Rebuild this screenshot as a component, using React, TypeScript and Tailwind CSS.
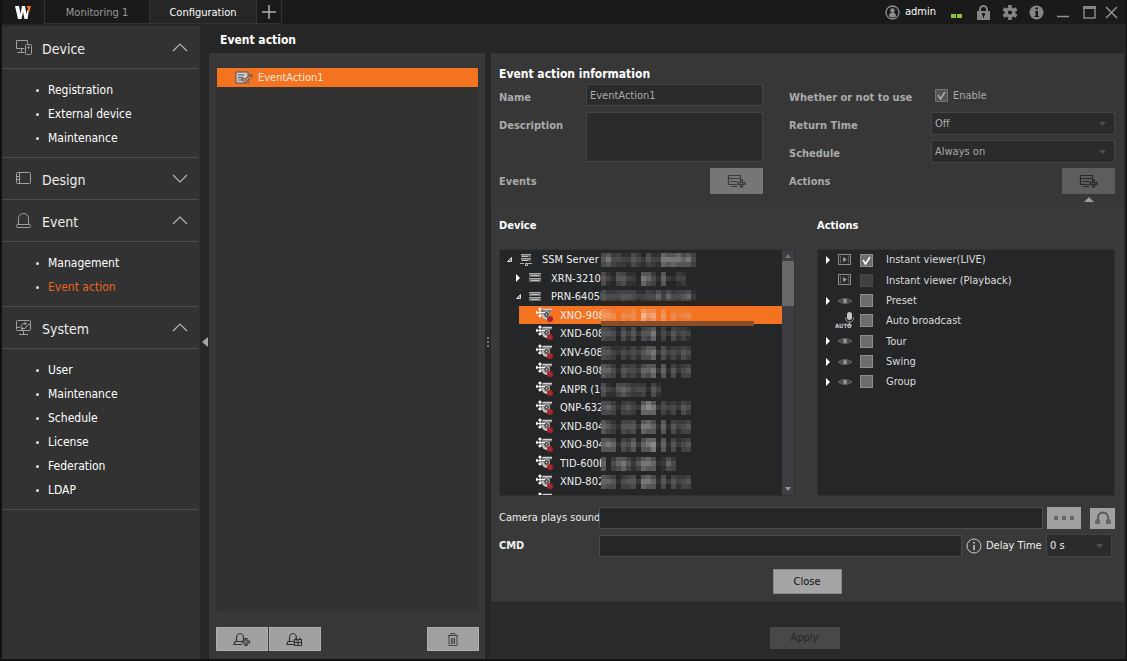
import React, { useState } from 'react';
import clsx from 'clsx';

const menu = [
  { title: 'Device', icon: 'device', items: ['Registration', 'External device', 'Maintenance'] },
  { title: 'Design', icon: 'design', items: [] },
  { title: 'Event', icon: 'event', items: ['Management', 'Event action'] },
  { title: 'System', icon: 'system', items: ['User', 'Maintenance', 'Schedule', 'License', 'Federation', 'LDAP'] },
];

// mask: brightness of each hidden block, 0-9
const devices = [
  { name: 'SSM Server (', depth: 0, open: true, mask: '5744335425337777674' },
  { name: 'XRN-3210E', depth: 1, open: false, mask: '53155320764162133' },
  { name: 'PRN-6405D', depth: 1, open: true, mask: '5444554334463644562' },
  { name: 'XNO-908', depth: 2, mask: '665154518671615345' },
  { name: 'XND-608', depth: 2, mask: '554153525571425343' },
  { name: 'XNV-608', depth: 2, mask: '553243435672534354' },
  { name: 'XNO-808', depth: 2, mask: '664154436672615245' },
  { name: 'ANPR (19', depth: 2, mask: '532565344153' },
  { name: 'QNP-632', depth: 2, mask: '564145327872434254' },
  { name: 'XND-804', depth: 2, mask: '653155527761615345' },
  { name: 'XNO-804', depth: 2, mask: '676154626781615245' },
  { name: 'TID-600E', depth: 2, mask: '6046752577612640' },
  { name: 'XND-802', depth: 2, mask: '665145527761525345' },
];

const actions = [
  { name: 'Instant viewer(LIVE)', icon: 'play', open: true, checked: true },
  { name: 'Instant viewer (Playback)', icon: 'play', dim: true },
  { name: 'Preset', icon: 'eye', open: true },
  { name: 'Auto broadcast', icon: 'mic' },
  { name: 'Tour', icon: 'eye', open: true },
  { name: 'Swing', icon: 'eye', open: true },
  { name: 'Group', icon: 'eye', open: true },
];

const greys = ['#242628', '#2e3031', '#383a3b', '#404243', '#4a4b4d', '#565658', '#646466', '#757678', '#868889', '#999b9c'];
const oranges = ['#f37321', '#f37321', '#f17a2d', '#ee7b35', '#ee8447', '#ee8c50', '#ef965f', '#f0a477', '#f2b38c', '#f3c09f'];

const Mosaic = ({ mask, selected }: any) => {
  const palette = selected ? oranges : greys;
  return (
    <svg width={mask.length * 5} height="14" shapeRendering="crispEdges" className={clsx('absolute top-[3px]', selected ? 'left-[82px]' : 'left-[101px]')}>
      {mask.split('').map((c: string, i: number) => {
        const n = Number(c);
        return (
          <g key={i}>
            <rect x={i * 5} y="0" width="5" height="4" fill={palette[Math.max(0, n - 2 + (i % 3 === 0 ? 1 : 0))]} />
            <rect x={i * 5} y="4" width="5" height="5" fill={palette[n]} />
            <rect x={i * 5} y="9" width="5" height="5" fill={palette[Math.max(0, n - 1 - (i % 2))]} />
          </g>
        );
      })}
    </svg>
  );
};

const MenuIcon = ({ name }: any) => (
  <svg width="18" height="17" viewBox="0 0 18 17" fill="none" stroke="#a0a0a0" strokeWidth="1" className="shrink-0">
    {name === 'device' && (
      <>
        <path d="M9.5 9.5h-8v-8h11v3M6.500 9.500v4M2.500 13.500h7" />
        <rect x="10.500" y="5.500" width="6" height="10" rx="1" />
        <path d="M13.500 7v3M12.500 8.500h2" />
      </>
    )}
    {name === 'design' && (
      <>
        <rect x="1.500" y="2.500" width="14" height="11" rx="1" />
        <path d="M4.500 2.500v11M1.500 6.500h3M1.500 9.500h3" />
      </>
    )}
    {name === 'event' && (
      <>
        <path d="M3.500 12.500V6.500a5 5 0 0 1 10 0v6" />
        <rect x="1.500" y="12.500" width="14" height="3" rx="1" />
      </>
    )}
    {name === 'system' && (
      <>
        <rect x="1.500" y="1.500" width="14" height="10" rx="1" />
        <path d="M8.500 11.500v4M4 15.500h9M2 8.500h3l3-4h3M6 9.500h4l3-4h2M9.500 3l2 1.500-2 1.500M8 8l-2 1.500 2 1.500" />
      </>
    )}
  </svg>
);

const ListIcon = ({ color = '#3a3a3a' }: any) => (
  <svg width="20" height="15" viewBox="0 0 20 15" fill="none" stroke={color} strokeWidth="1.200">
    <path d="M10 10.500H1.500v-9h12V6M1.500 4.500h12M3.500 7.500h7M4 12.500h6" />
    <path d="M13.500 6h2v2.500H18v2h-2.500V13h-2v-2.500H11v-2h2.500z" fill={color} fillOpacity="0.4" />
  </svg>
);

const BellIcon = ({ kind }: any) => (
  <svg width="18" height="15" viewBox="0 0 18 15" fill="none" stroke="#333" strokeWidth="1.200">
    <path d="M3.500 9.500V6a3.500 4.500 0 0 1 7 0v2.500M9 9.500H2L1 12.500h8" />
    {kind === 'add' ? (
      <path d="M12 6.500h2V9h2.500v2H14v2.500h-2V11H9.500V9H12z" fill="#999" />
    ) : (
      <path d="M8.500 7.500h7v6h-7zM8.500 10.500h7M12 7.500v6M10 5.500v2M14 5.500v2" />
    )}
  </svg>
);

const CameraIcon = () => (
  <svg width="18" height="16" viewBox="0 0 18 16" className="shrink-0">
    <path d="M6 2h10v2l-2 1v6l-5 2-3-3-1-4z" fill="#777" />
    <path d="M7 2.500h9M6 7l2 4 4 1.500" fill="none" stroke="#d0d0d0" strokeWidth="1.500" />
    <circle cx="10.500" cy="7.500" r="2.800" fill="#333" stroke="#c8c8c8" />
    <circle cx="10.500" cy="7.500" r="0.900" fill="#ddd" />
    <path d="M4 1v9M0 5.500h9M2.500 2.500L4 1l1.500 1.500M1.500 4L0 5.500 1.500 7M2.500 8.500L4 10l1.500-1.500" fill="none" stroke="#fff" strokeWidth="1.200" />
    <circle cx="14" cy="12" r="3" fill="#a8262b" />
  </svg>
);

const ServerIcon = ({ root }: any) => (
  <svg width="14" height="13" viewBox="0 0 14 13" className="shrink-0" shapeRendering="crispEdges">
    <path d={root ? 'M2 1h10v3H2zM2 5h10v3H2z' : 'M1 2h12v4H1zM1 7h12v4H1z'} fill="#6e6e6e" />
    <path d={root ? 'M2 1.500h10M2 5.500h10' : 'M1 2.500h12M1 7.500h12'} stroke="#a8a8a8" />
    <path d={root ? 'M3 3h6M3 7h6' : 'M3 4.500h8M3 9.500h8'} stroke="#c4c4c4" />
    {root && <path d="M1 10.500h4M6 10h2v2H6zM9 10.500h4" stroke="#b0b0b0" fill="none" />}
  </svg>
);

const Arrow = ({ open }: any) => (
  <svg width="7" height="8" viewBox="0 0 7 8" className="shrink-0">
    {open ? <path d="M5.500 2.500v4h-4z" fill="#777" stroke="#ddd" strokeWidth="1" /> : <path d="M1 0l4 4-4 4z" fill="#fff" />}
  </svg>
);

const ActionIcon = ({ name }: any) => {
  if (name === 'play') return (
    <svg width="14" height="12" viewBox="0 0 14 12">
      <rect x="0.500" y="0.500" width="12" height="10" fill="#2b2b2b" stroke="#8c8c8c" />
      <path d="M2.500 2v7M10.500 2v7" stroke="#606060" />
      <path d="M5 3l4 2.500L5 8z" fill="#999" />
    </svg>
  );
  if (name === 'eye') return (
    <svg width="16" height="8" viewBox="0 0 16 8">
      <path d="M1 4q7-5 14 0q-7 5-14 0z" fill="#444" stroke="#666" />
      <circle cx="8" cy="4" r="2" fill="#999" />
    </svg>
  );
  return (
    <svg width="20" height="17" viewBox="0 0 20 17">
      <rect x="12" y="0" width="5" height="8" rx="2.500" fill="#c4c4c4" />
      <path d="M10.500 5.500q0 4.500 4 4.500t4-4.500M14.500 10v3M12 13.500h5" fill="none" stroke="#999" />
      <text x="0" y="16" fontSize="6" fontWeight="bold" fill="#ccc">AUTO</text>
    </svg>
  );
};

const Tick = ({ id, checked, dim, soft }: any) => {
  const [on, setOn] = useState(!!checked);
  return (
    <span className="relative flex shrink-0">
      <input
        id={id}
        type="checkbox"
        checked={on}
        onChange={() => setOn(!on)}
        className={clsx('size-[13px] appearance-none border', dim ? 'border-[#484848] bg-[#404040]' : soft ? 'border-[#747474] bg-[#555]' : 'border-[#8e8e8e] bg-[#6d6d6d]')}
      />
      {on && (
        <svg width="13" height="13" viewBox="0 0 13 13" className="pointer-events-none absolute inset-0" fill="none" stroke={soft ? '#aaa' : '#fff'} strokeWidth="1.500">
          <path d="M3 6l2.500 4L10 3" />
        </svg>
      )}
    </span>
  );
};

const Dropdown = ({ id, value, className }: any) => (
  <div className={clsx('relative', className)}>
    <select id={id} className="h-[23px] w-full appearance-none border border-[#444] bg-[#2b2b2b] px-[3px] pt-px text-inherit">
      <option>{value}</option>
    </select>
    <svg width="8" height="4" viewBox="0 0 8 4" className="pointer-events-none absolute right-2 top-[10px]">
      <path d="M0 0h7L3.500 4z" fill="#505050" />
    </svg>
  </div>
);

const TopBar = () => (
  <header className="flex h-6 shrink-0 items-stretch bg-[#1a1a1a] text-white">
    <div className="flex w-[42px] items-center justify-center">
      <svg width="18" height="15" viewBox="0 0 18 15">
        <path d="M1 1h4l1.500 8L8 1h3l1.500 8 1-4h1.500l-1.500 9h-3L9 7l-1.500 7h-3.500z" fill="#fff" />
        <path d="M12.500 1h4.500l-2 7-1-4z" fill="#f37321" />
      </svg>
    </div>
    <button className="w-[106px] border-x border-b border-[#333] pt-[3px] text-[#999]">Monitoring 1</button>
    <button className="w-[106px] border-b border-[#333] bg-[#262626] pt-[3px]">Configuration</button>
    <button aria-label="Add tab" className="flex w-[26px] items-center justify-center border-x border-b border-[#333]">
      <svg width="14" height="14" viewBox="0 0 14 14" stroke="#b0b0b0" strokeWidth="1.500"><path d="M7 0v14M0 7h14" /></svg>
    </button>
    <div className="ml-auto flex items-center pr-[8px]">
      <svg width="15" height="15" viewBox="0 0 15 15">
        <circle cx="7.500" cy="7.500" r="6.500" fill="none" stroke="#909090" strokeWidth="1.300" />
        <circle cx="7.500" cy="5.500" r="2.200" fill="#909090" />
        <path d="M4 11.500q0-4 3.500-4t3.500 4q-3.500 2-7 0z" fill="#909090" />
      </svg>
      <span className="ml-[5px] w-[31px] pt-px">admin</span>
      <svg width="11" height="4" viewBox="0 0 11 4" className="ml-[15px] mt-[7px]"><path d="M0 0h5v4H0zM6 0h5v4H6z" fill="#8cc63f" /></svg>
      <button aria-label="Lock" className="ml-[15px]">
        <svg width="13" height="15" viewBox="0 0 13 15">
          <path d="M3 6V4.500a3.500 3.500 0 0 1 7 0V6" fill="none" stroke="#858585" strokeWidth="2" />
          <path d="M0 6h13v9H0z" fill="#858585" />
          <path d="M5 8h3v2.500H7V13H6v-2.500H5z" fill="#1a1a1a" />
        </svg>
      </button>
      <button aria-label="Settings" className="ml-[12px]">
        <svg width="16" height="15" viewBox="0 0 16 16">
          <circle cx="8" cy="8" r="4" fill="none" stroke="#858585" strokeWidth="3.500" />
          <path d="M8 0v3M8 13v3M1 4l2.500 1.500M12.500 10.500L15 12M1 12l2.500-1.500M12.500 5.500L15 4" stroke="#858585" strokeWidth="4" />
        </svg>
      </button>
      <button aria-label="About" className="ml-[11px]">
        <svg width="15" height="15" viewBox="0 0 15 15">
          <circle cx="7.500" cy="7.500" r="7" fill="#858585" />
          <path d="M6.500 2.500h2.500v2H6.500zM6 6h3v5h1v1H5.500v-1h1V7H6z" fill="#1a1a1a" />
        </svg>
      </button>
      <button aria-label="Minimize" className="ml-[12px]">
        <svg width="14" height="14" viewBox="0 0 14 14"><path d="M1 11.500h12" stroke="#909090" strokeWidth="1.500" /></svg>
      </button>
      <button aria-label="Maximize" className="ml-[13px]">
        <svg width="13" height="13" viewBox="0 0 13 13"><path d="M1 1.500h11v10.500H1z" fill="none" stroke="#858585" strokeWidth="1.500" /><path d="M0 1.500h13" stroke="#858585" strokeWidth="3" /></svg>
      </button>
      <button aria-label="Close window" className="ml-[9px]">
        <svg width="13" height="13" viewBox="0 0 13 13"><path d="M1 1l11 11M12 1L1 12" stroke="#909090" strokeWidth="1.500" /></svg>
      </button>
    </div>
  </header>
);

const Sidebar = () => (
  <nav className="mt-[2px] w-[198px] shrink-0 bg-[#323232] pr-[2px] pt-px text-white">
    {menu.map((section) => (
      <section key={section.title}>
        <button className="flex h-[42px] w-full items-center border-b border-[#4d4d4d] pl-[13px] pr-[10px] text-left text-[14px] text-[#eee]">
          <MenuIcon name={section.icon} />
          <span className="ml-[9px] flex-1 pt-[3px]">{section.title}</span>
          <svg width="16" height="9" viewBox="0 0 16 9" fill="none" stroke="#b5b5b5" strokeWidth="1.200">
            <path d={section.items.length ? 'M1 8l7-7 7 7' : 'M1 1l7 7 7-7'} />
          </svg>
        </button>
        {section.items.length > 0 && (
          <ul className="border-b border-[#4d4d4d] pb-[7px] pt-[9px] text-[12px]">
            {section.items.map((item) => (
              <li key={item} className="flex h-6 items-center pl-[34px]">
                <span className="size-[3px] rounded-full bg-[#ddd]" />
                <a href="#" className={clsx('ml-[9px]', item === 'Event action' && 'text-[#e8671f]')}>{item}</a>
              </li>
            ))}
          </ul>
        )}
      </section>
    ))}
  </nav>
);

const EventList = () => (
  <div className="flex w-[276px] shrink-0 flex-col">
    <h1 className="h-[29px] pl-[11px] pt-2 text-[12px] font-bold leading-4 text-white">Event action</h1>
    <div className="flex flex-1 flex-col bg-[#383838] pb-[8px] pl-[7px] pr-[6px] pt-[14px]">
      <ul className="flex-1 border border-[#353535] bg-[#323232] text-white">
        <li className="flex h-[19px] items-center bg-[#f37321] pl-[18px] text-[#f8e8dc]">
          <svg width="18" height="13" viewBox="0 0 18 13" className="mr-[5px]">
            <rect x="1" y="1" width="12" height="11" fill="#c9c9c9" stroke="#555" />
            <path d="M3 4h6M3 6.500h4M3 9h7" stroke="#555" />
            <path d="M7 7l3 3 7-6" fill="none" stroke="#555" strokeWidth="3" />
            <path d="M8 8l2 2 6-5" fill="none" stroke="#f08a45" strokeWidth="1.500" />
          </svg>
          <span className="pt-[2px]">EventAction1</span>
        </li>
      </ul>
      <div className="mt-[14px] flex gap-px">
        <button aria-label="Add event action" className="flex h-6 w-[52px] items-center justify-center border border-[#b0b0b0] bg-[#a0a0a0]"><BellIcon kind="add" /></button>
        <button aria-label="Schedule event action" className="flex h-6 w-[52px] items-center justify-center border border-[#b0b0b0] bg-[#a0a0a0]"><BellIcon kind="schedule" /></button>
        <button aria-label="Delete event action" className="ml-auto flex h-6 w-[52px] items-center justify-center border border-[#b0b0b0] bg-[#a0a0a0]">
          <svg width="12" height="15" viewBox="0 0 12 15" fill="none" stroke="#444">
            <path d="M1 3.500h10M4 3V1.500h4V3M2 4v9.500h8V4M4.500 6v6M6 6v6M7.500 6v6" />
          </svg>
        </button>
      </div>
    </div>
  </div>
);

const DeviceTree = () => (
  <div className="flex h-[247px] w-[296px] shrink-0 border border-[#303132] bg-[#242628] text-[#eee]">
    <div className="min-w-0 flex-1 overflow-hidden">
      <ul className="flex h-[241px] flex-col">
        {devices.map((d) => {
          const selected = d.name === 'XNO-908';
          return (
            <li key={d.name} className={clsx('relative flex flex-1 items-center whitespace-nowrap', selected && 'ml-[19px] bg-[#f37321] pl-[17px]', d.depth === 0 && 'pl-[6px]', d.depth === 1 && 'pl-[15px]', d.depth === 2 && !selected && 'pl-[36px]')}>
              {d.depth < 2 && <Arrow open={d.open} />}
              {d.depth < 2 && <span className="ml-[6px] flex"><ServerIcon root={d.depth === 0} /></span>}
              {d.depth === 2 && <CameraIcon />}
              <span className={clsx('pt-[2px]', d.depth < 2 ? 'ml-[9px]' : 'ml-[6px]')}>{d.name}</span>
              {selected && (
                <>
                  <span className="absolute -top-[5px] left-[82px] h-[5px] w-[153px] bg-[#30221b]" />
                  <span className="absolute -bottom-[2px] left-[82px] z-10 h-[5px] w-[153px] bg-[#8a4d27]" />
                </>
              )}
              <Mosaic mask={d.mask} selected={selected} />
            </li>
          );
        })}
      </ul>
      <div className="pl-[36px] pt-px"><CameraIcon /></div>
    </div>
    <div className="flex w-[12px] flex-col items-center bg-[#3e3e42] py-1">
      <svg width="6" height="4" viewBox="0 0 6 4"><path d="M3 0l3 4H0z" fill="#777" /></svg>
      <div className="mt-[3px] h-[45px] w-full bg-[#686868]" />
      <svg width="6" height="4" viewBox="0 0 6 4" className="mt-auto"><path d="M0 0h6L3 4z" fill="#999" /></svg>
    </div>
  </div>
);

const ActionList = () => (
  <div className="h-[247px] flex-1 border border-[#303132] bg-[#242628] text-[#ddd]">
    <ul className="flex h-[142px] flex-col">
      {actions.map((a) => (
        <li key={a.name} className="flex flex-1 items-center pl-[7px]">
          <span className="w-[10px]">{a.open && <Arrow />}</span>
          <span className="flex w-[20px] justify-center"><ActionIcon name={a.icon} /></span>
          <span className="ml-[5px]"><Tick id={a.name} checked={a.checked} dim={a.dim} /></span>
          <label htmlFor={a.name} className="ml-[13px] pt-px">{a.name}</label>
        </li>
      ))}
    </ul>
  </div>
);

const InfoForm = () => (
  <form className="pl-[8px] pr-[9px] pt-[13px] text-[#aaa]">
    <h2 className="h-[18px] text-[12px] font-bold leading-4 text-white">Event action information</h2>
    <div className="flex gap-[26px] leading-4">
      <div className="grid w-[264px] grid-cols-[87px_1fr] grid-rows-[28px_56px_28px]">
        <label htmlFor="name" className="pt-[6px] font-bold">Name</label>
        <input id="name" defaultValue="EventAction1" className="h-[22px] w-full border border-[#444] bg-[#2b2b2b] px-[3px]" />
        <label htmlFor="description" className="pt-[6px] font-bold">Description</label>
        <textarea id="description" className="h-[50px] w-full resize-none border border-[#444] bg-[#2b2b2b] px-1" />
        <span className="pt-[6px] font-bold">Events</span>
        <button type="button" aria-label="Add event" className="flex h-[26px] w-[53px] items-center justify-center justify-self-end bg-[#767676]"><ListIcon /></button>
      </div>
      <div className="grid flex-1 auto-rows-[28px] grid-cols-[142px_1fr]">
        <label htmlFor="enable" className="whitespace-nowrap pt-[6px] font-bold">Whether or not to use</label>
        <div className="flex h-[23px] items-center gap-[5px] pl-1"><Tick id="enable" checked soft /><label htmlFor="enable" className="pt-px">Enable</label></div>
        <label htmlFor="return" className="pt-[6px] font-bold">Return Time</label>
        <Dropdown id="return" value="Off" />
        <label htmlFor="schedule" className="pt-[6px] font-bold">Schedule</label>
        <Dropdown id="schedule" value="Always on" />
        <span className="pt-[6px] font-bold">Actions</span>
        <div className="relative flex justify-end">
          <button type="button" aria-label="Add action" className="flex h-[26px] w-[53px] items-center justify-center bg-[#5d5d5d]"><ListIcon color="#292929" /></button>
          <svg width="10" height="5" viewBox="0 0 10 5" className="absolute right-[21px] top-[29px]"><path d="M5 0l5 5H0z" fill="#999" /></svg>
        </div>
      </div>
    </div>
  </form>
);

const DetailPanel = () => (
  <main className="mt-[29px] flex min-w-0 flex-1 flex-col bg-[#373737]">
    <InfoForm />
    <div className="mt-[6px] bg-[#393939] pb-[7px] pl-[8px] pr-[9px] pt-[16px] text-[#eee]">
      <div className="flex gap-[22px]">
        <div>
          <h3 className="h-[31px] font-bold leading-4 text-white">Device</h3>
          <DeviceTree />
        </div>
        <div className="flex-1">
          <h3 className="h-[31px] font-bold leading-4 text-white">Actions</h3>
          <ActionList />
        </div>
      </div>
      <div className="mt-[11px] flex items-center">
        <label htmlFor="sound" className="w-[100px] shrink-0 whitespace-nowrap pt-px">Camera plays sound</label>
        <input id="sound" className="h-[22px] min-w-0 flex-1 border border-[#4a4a4a] bg-[#262626] px-1" />
        <button aria-label="Browse" className="ml-1 flex h-[22px] w-[34px] items-center justify-center bg-[#a0a0a0]">
          <svg width="20" height="4" viewBox="0 0 20 4"><path d="M0 0h4v4H0zM8 0h4v4H8zM16 0h4v4h-4z" fill="#666" /></svg>
        </button>
        <button aria-label="Listen" className="ml-[9px] flex h-[21px] w-[25px] items-center justify-center bg-[#a0a0a0]">
          <svg width="16" height="14" viewBox="0 0 16 14">
            <path d="M3 9V6.500a5 5 0 0 1 10 0V9" fill="none" stroke="#555" strokeWidth="1.800" />
            <path d="M1 8l4 1v4H0v-2zM15 8l-4 1v4h5v-2z" fill="#666" />
          </svg>
        </button>
      </div>
      <div className="mt-[5px] flex items-center pr-[3px]">
        <label htmlFor="cmd" className="w-[100px] shrink-0 pt-px font-bold">CMD</label>
        <input id="cmd" className="h-[22px] min-w-0 flex-1 border border-[#4a4a4a] bg-[#262626] px-1" />
        <svg width="16" height="16" viewBox="0 0 16 16" className="ml-1" fill="none" stroke="#ccc">
          <circle cx="8" cy="8" r="7" />
          <path d="M8 7v5M8 4v1.500" strokeWidth="1.500" />
        </svg>
        <label htmlFor="delay" className="ml-1 w-[60px] whitespace-nowrap pt-px">Delay Time</label>
        <Dropdown id="delay" value="0 s" className="w-[66px]" />
      </div>
      <div className="mt-[12px] flex justify-center">
        <button className="h-[25px] w-[69px] border border-[#888] bg-[#a5a5a5] pt-px text-[#111]">Close</button>
      </div>
    </div>
    <div className="flex flex-1 items-center justify-center border border-[#303030] bg-[#2a2a2a] pt-4">
      <button disabled className="mr-[6px] h-[22px] w-[70px] bg-[#484848] pt-px text-[#252525]">Apply</button>
    </div>
  </main>
);

export default function App() {
  return (
    <div className="flex min-h-screen flex-col border-b-2 border-l-2 border-r border-[#111] bg-[#262626] font-['DejaVu_Sans_Condensed','DejaVu_Sans',sans-serif] text-[11px]">
      <TopBar />
      <div className="flex flex-1 pr-[2px]">
        <Sidebar />
        <button aria-label="Collapse menu" className="flex w-[9px] shrink-0 items-center justify-center">
          <svg width="6" height="10" viewBox="0 0 6 10"><path d="M6 0v10L0 5z" fill="#a5a5a5" /></svg>
        </button>
        <EventList />
        <div className="flex w-[6px] shrink-0 items-center justify-center">
          <svg width="2" height="10" viewBox="0 0 2 10"><path d="M0 0h2v2H0zM0 4h2v2H0zM0 8h2v2H0z" fill="#777" /></svg>
        </div>
        <DetailPanel />
      </div>
    </div>
  );
}
